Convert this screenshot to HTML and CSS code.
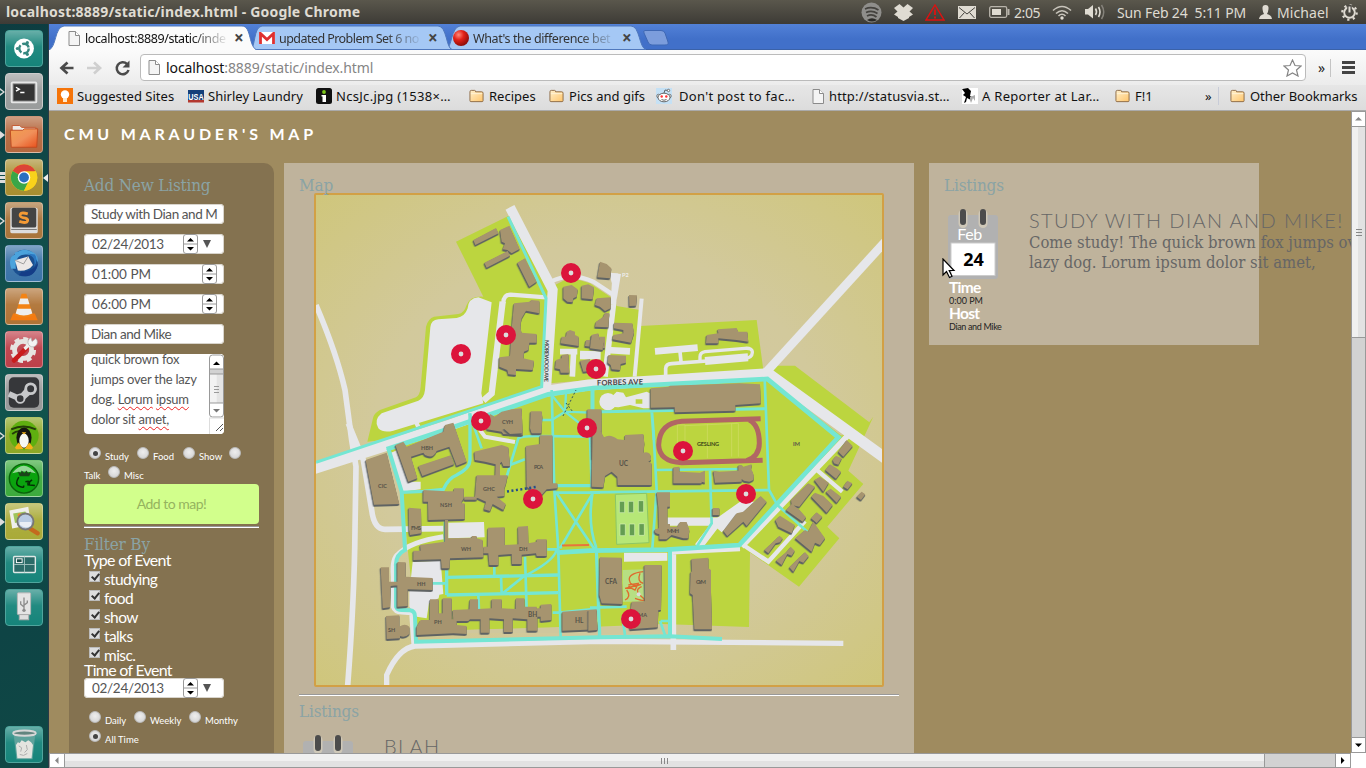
FILE: index.html
```html
<!DOCTYPE html>
<html lang="en">
<head>
<meta charset="utf-8">
<title>CMU Marauder's Map</title>
<link rel="stylesheet" href="styles.css">
</head>
<body>
<svg class="defs" width="0" height="0" aria-hidden="true">
  <defs>
    <linearGradient id="folderFill" x1="0" y1="0" x2="1" y2="1"><stop offset="0" stop-color="#fff0cc"/><stop offset="1" stop-color="#ffc56b"/></linearGradient>
    <linearGradient id="orangeFill" x1="0" y1="0" x2="1" y2="1"><stop offset="0" stop-color="#f2a050"/><stop offset=".5" stop-color="#f0905a"/><stop offset="1" stop-color="#e8501c"/></linearGradient>
    <radialGradient id="redBall" cx=".35" cy=".3" r=".8"><stop offset="0" stop-color="#ff8a7a"/><stop offset=".4" stop-color="#e32219"/><stop offset="1" stop-color="#7c0805"/></radialGradient>
    <radialGradient id="mapFill" cx=".5" cy=".5" r=".72"><stop offset="0" stop-color="#d3c8a6"/><stop offset=".55" stop-color="#d2c99c"/><stop offset="1" stop-color="#cfc67a"/></radialGradient>
    <symbol id="folder" viewBox="0 0 16 14"><path d="M1 12V2.500Q1 1 2.500 1H6Q7 1 7 2.500H13.500Q15 2.500 15 4V12Q15 13 14 13H2Q1 13 1 12Z" fill="url(#folderFill)" stroke="#8c6a45"/><path d="M2 4.500H14" stroke="#fff3d8"/></symbol>
    <symbol id="page" viewBox="0 0 12 15"><path d="M1 .5H7.500L11.500 4.500V14.500H1Z" fill="#f4f4f4" stroke="#8b8b8b"/><path d="M7.500 .5V4.500H11.500" fill="#fff" stroke="#8b8b8b"/></symbol>
    <symbol id="spin" viewBox="0 0 15 20"><rect x=".5" y=".5" width="14" height="19" rx="2.500" fill="#fff" stroke="#9a9a9a"/><path d="M0 10H15" stroke="#9a9a9a"/><path d="M4 7.500L7.500 4L11 7.500ZM4 13L7.500 16.500L11 13Z" fill="#000"/></symbol>
    <symbol id="cal" viewBox="0 0 52 72"><rect x="1" y="7" width="50" height="64" rx="3" fill="#b1b1b1"/><path d="M16 6V15.500M36 6V15.500" stroke="#cfc8b8" stroke-width="9" stroke-linecap="round"/><path d="M16 4V14M36 4V14" stroke="#4c4c4c" stroke-width="6" stroke-linecap="round"/><rect x="4" y="35" width="44" height="32.500" fill="#fff" stroke="#ccc"/></symbol>
  </defs>
</svg>

<header class="panelbar">
  <div class="wtitle">localhost:8889/static/index.html - Google Chrome</div>
  <div class="tray">
    <svg class="t-spot" width="21" height="21" viewBox="0 0 21 21"><circle cx="10.500" cy="10.500" r="10" fill="#8f8e8b"/><path d="M4 7Q11 4 17.500 8M5 10.500Q11 8 16.500 11.500M6 14Q11 11.500 15.500 15" fill="none" stroke="#44423e" stroke-width="1.800"/><path d="M6 18Q11 14.500 16 18Q11 21 6 18Z" fill="#2b2a27"/></svg>
    <svg class="t-drop" width="19" height="17" viewBox="0 0 19 17"><path d="M5.500 0L9.500 3.500L13.500 0L19 4L15.500 7.500L19 10.500L15 13V14L9.500 17L4 14V13L0 10.500L3.500 7.500L0 4Z" fill="#dfdbd2"/></svg>
    <svg class="t-warn" width="20" height="17" viewBox="0 0 20 17"><path d="M10 1L19 16H1Z" fill="none" stroke="#e01010" stroke-width="1.400"/><path d="M10 5.500V11M10 12.500V14.500" stroke="#e01010" stroke-width="1.800"/></svg>
    <svg class="t-mail" width="18" height="13" viewBox="0 0 18 13"><rect width="18" height="13" fill="#dfdbd2"/><path d="M1 1.500L9 8L17 1.500M1.500 12L6.500 6.500M16.500 12L11.500 6.500" fill="none" stroke="#45433e"/></svg>
    <svg class="t-batt" width="21" height="12" viewBox="0 0 21 12"><rect x=".7" y=".7" width="17" height="10.600" rx="1.500" fill="none" stroke="#b8b4ab" stroke-width="1.300"/><rect x="3" y="3" width="9" height="6" fill="#dfdbd2"/><rect x="18.500" y="3" width="2" height="6" fill="#b8b4ab"/></svg>
    <span class="t-205">2:05</span>
    <svg class="t-wifi" width="20" height="15" viewBox="0 0 20 15"><path d="M1 5.500Q10 -2.500 19 5.500M4 8.500Q10 3 16 8.500M6.500 11Q10 7.500 13.500 11" fill="none" stroke="#c8c4bb" stroke-width="1.600"/><circle cx="10" cy="13" r="1.700" fill="#dfdbd2"/></svg>
    <svg class="t-vol" width="20" height="16" viewBox="0 0 20 16"><path d="M0 5H3L8 1V14.500L3 10.500H0Z" fill="#dfdbd2"/><path d="M10.500 4.500Q12.500 8 10.500 11M13.500 3Q16.500 8 13.500 13" fill="none" stroke="#dfdbd2" stroke-width="1.600"/><path d="M16.500 1Q21 8 16.500 15" fill="none" stroke="#85827b" stroke-width="1.500"/></svg>
    <span class="t-date">Sun Feb 24&nbsp; 5:11 PM</span>
    <svg class="t-user" width="13" height="14" viewBox="0 0 13 14"><path d="M6.500 0Q10 0 9.500 4Q9 8 8 9Q12.500 10 13 14H0Q.5 10 5 9Q4 8 3.500 4Q3 0 6.500 0Z" fill="#dfdbd2"/></svg>
    <span class="t-name">Michael</span>
    <svg class="t-gear" width="17" height="17" viewBox="0 0 17 17"><circle cx="8.500" cy="8.500" r="5.300" fill="none" stroke="#dfdbd2" stroke-width="1.900"/><circle cx="8.500" cy="8.500" r="7.200" fill="none" stroke="#dfdbd2" stroke-width="2.200" stroke-dasharray="2.200 3.450"/><path d="M8.500 1V9" stroke="#4a4843" stroke-width="4.500"/><path d="M8.500 2.500V8.500" stroke="#dfdbd2" stroke-width="2"/></svg>
  </div>
</header>

<div class="desk">
<nav class="launcher">
  <div class="tile teal"><svg viewBox="0 0 37 37"><circle cx="18.500" cy="18.500" r="10.500" fill="#fff"/><circle cx="18.500" cy="18.500" r="5" fill="none" stroke="#35877f" stroke-width="2.600" stroke-dasharray="8.500 2"/><circle cx="11.500" cy="18.500" r="1.700" fill="#35877f"/><circle cx="22" cy="12.400" r="1.700" fill="#35877f"/><circle cx="22" cy="24.600" r="1.700" fill="#35877f"/></svg></div>
  <div class="tile silver"><i class="arr hollow"></i><svg viewBox="0 0 37 37"><rect x="4.500" y="8" width="28" height="23" rx="2" fill="#e6e6e6"/><rect x="7" y="10.500" width="23" height="18" fill="#333" stroke="#777"/><path d="M10 14L13.500 16L10 18M14.500 19.500H19" fill="none" stroke="#fff" stroke-width="1.500"/></svg></div>
  <div class="tile rust"><i class="arr"></i><svg viewBox="0 0 37 37"><path d="M6 12V9H14L16 11H31V20H6Z" fill="#f0ebe8" stroke="#c45a32"/><path d="M4 14H17L19 12.500H33L32 32H5Z" fill="url(#orangeFill)" stroke="#bf4a20"/></svg></div>
  <div class="tile gold"><i class="bars"></i><i class="arr rightside"></i><svg viewBox="0 0 37 37"><circle cx="18.500" cy="18.500" r="14" fill="#f9d21b"/><path d="M18.500 18.500L6.400 11.500A14 14 0 0 1 30.600 11.500Z" fill="#dc4437"/><path d="M18.500 18.500L6.400 11.500A14 14 0 0 0 18.500 32.500L24 22Z" fill="#3aa648"/><path d="M18.500 12H31A14 14 0 0 1 18.500 32.500L24 21Z" fill="#f9d21b"/><circle cx="18.500" cy="18.500" r="6.600" fill="#fff"/><circle cx="18.500" cy="18.500" r="5.200" fill="#2a6fc0"/></svg></div>
  <div class="tile brown"><i class="arr hollow"></i><svg viewBox="0 0 37 37"><rect x="4" y="5" width="29" height="27" rx="2" fill="#ddd"/><rect x="5.500" y="5" width="26" height="21" rx="2" fill="#444"/><path d="M22.500 11.500Q14 9 14.500 13.500Q15 15.500 20 16Q24 17.500 21.500 20Q19 21.500 13.500 19.500" fill="none" stroke="#f39a35" stroke-width="3"/><path d="M5 28H32" stroke="#777"/></svg></div>
  <div class="tile blue"><svg viewBox="0 0 37 37"><circle cx="19" cy="18" r="14" fill="#1b5090"/><path d="M5 24Q1 12 9 9Q8 6 12 6Q20 1 30 8Q34 12 33 17Q30 10 22 9Q14 8 11 14Q9 18 10 24Z" fill="#4ba3dc"/><path d="M9 15L23 11L28 20Q23 27 12 26Z" fill="#ece8e6"/><path d="M9 15L18 19L23 11" fill="none" stroke="#999"/><path d="M13 31Q30 36 33.500 18Q27 28 16 27Z" fill="#143d87"/><path d="M22 8Q32 12 29 22Q34 15 30 9Z" fill="#2b77c0"/></svg></div>
  <div class="tile amber"><svg viewBox="0 0 37 37"><path d="M7 26H30L33 33H4Z" fill="#f47b11"/><path d="M16 5H21L28 28Q18.500 32 9 28Z" fill="#f38315"/><path d="M14.500 10H22.500L24.300 16H12.700ZM11.200 21H25.800L27.300 26Q18 30 9.700 26Z" fill="#eee"/></svg></div>
  <div class="tile red"><svg viewBox="0 0 37 37"><circle cx="17.500" cy="19" r="11.500" fill="none" stroke="#e6e4e1" stroke-width="4.500" stroke-dasharray="5 4"/><circle cx="17.500" cy="19" r="9" fill="none" stroke="#e6e4e1" stroke-width="5"/><path d="M8 30L21 17" stroke="#c91c1c" stroke-width="5" stroke-linecap="round"/><path d="M19 18L27 10" stroke="#eee" stroke-width="3.500"/><path d="M31 7A5 5 0 1 1 26 6L27 10Z" fill="#f3f3f3" stroke="#aaa" stroke-width=".7"/></svg></div>
  <div class="tile steam"><svg viewBox="0 0 37 37"><rect x="2.500" y="2.500" width="32" height="32" rx="5" fill="#36373a"/><path d="M2.500 20L15 25.500" fill="none" stroke="#c7c8ca" stroke-width="6"/><path d="M14 21L21 13L27 19L18 27Z" fill="#c7c8ca"/><circle cx="25.500" cy="14.500" r="5.200" fill="#36373a" stroke="#c7c8ca" stroke-width="3"/><circle cx="14.500" cy="25" r="4.500" fill="#36373a" stroke="#c7c8ca" stroke-width="2"/></svg></div>
  <div class="tile lime"><i class="arr hollow"></i><svg viewBox="0 0 37 37"><circle cx="18.500" cy="18.500" r="15.500" fill="#5faf10"/><path d="M5 12Q18 6 31 12M6 17Q12 12 17 15" fill="none" stroke="#233c08" stroke-width="2"/><ellipse cx="18.500" cy="21" rx="8" ry="11" fill="#15150f"/><ellipse cx="18.500" cy="24" rx="5" ry="7.500" fill="#f7f7f2"/><path d="M16 15H21L18.500 17.500ZM9 31L13 26L18 33H10ZM28 31L24 26L19 33H27Z" fill="#f5b21a"/></svg></div>
  <div class="tile green"><svg viewBox="0 0 37 37"><circle cx="18.500" cy="18.500" r="15.500" fill="#0aa30e" stroke="#09620b" stroke-width="1.500"/><path d="M6 13Q18 -3 31 13Q18 9 6 13Z" fill="#e1f5e0" opacity=".65"/><path d="M13 17Q8 25 14 27Q19 29 18 26M20 22Q26 20 24 25M22 25L30 26M27 20L22 24" fill="none" stroke="#052d06" stroke-width="1.600"/><path d="M12 11L14 16H24L26 11L23 13L21 10L19 13L16 10L15 13Z" fill="#1b4419"/></svg></div>
  <div class="tile olive"><i class="arr"></i><svg viewBox="0 0 37 37"><path d="M3 7L23 3L26 22L6 26Z" fill="#efefec"/><path d="M7 10L20 8L22 17L9 20Z" fill="#9fc45c"/><circle cx="14" cy="12" r="2.200" fill="#f08a2c"/><path d="M25 26L33 31" stroke="#c46a1e" stroke-width="4.500" stroke-linecap="round"/><circle cx="20" cy="18.500" r="8.500" fill="#b9cbe3" stroke="#777" stroke-width="2"/><path d="M14 19H26V23Q20 27 14 22Z" fill="#e9eef6"/></svg></div>
  <div class="tile teal"><svg viewBox="0 0 37 37"><rect x="7.500" y="10" width="23" height="17" rx="1" fill="#2b6b68" stroke="#dfe9e7" stroke-width="1.500"/><path d="M19 10V27M8 18.500H30" stroke="#9fc0bc"/><rect x="10.500" y="12.500" width="6" height="4" fill="#1c4f4c" stroke="#fff"/></svg></div>
  <div class="tile teal"><svg viewBox="0 0 37 37"><rect x="11.500" y="3" width="14" height="23" rx="1" fill="#e4e4e4" stroke="#b5b5b5"/><rect x="13.500" y="26" width="10" height="5.500" fill="#dedede" stroke="#aaa"/><path d="M18.500 21V8M18.500 18L15 15V12M18.500 16L22 13.500V11" fill="none" stroke="#8b8b8b" stroke-width="1.400"/><circle cx="18.500" cy="21.500" r="1.800" fill="#8b8b8b"/></svg></div>
  <div class="tile teal trash"><svg viewBox="0 0 37 37"><path d="M7.500 7L10.500 34H27.500L30.500 7Z" fill="#5fa39c"/><path d="M10 19L12 16L14 17L16 14L20 16L23 14L26 16L28 19L26.500 33H11.500Z" fill="#e4e4df"/><path d="M13 20L16 22L15 26M21 19L22 24L19 27M14 29L18 30L22 28" fill="none" stroke="#aaa"/><ellipse cx="19" cy="6.500" rx="12" ry="2.800" fill="#62857f" stroke="#d7d7d7" stroke-width="2"/></svg></div>
</nav>

<section class="chrome">
  <div class="tabs">
    <svg class="tabshape" width="640" height="26" viewBox="49 0 640 26">
      <path d="M446 25.500C452 24 451 3 460 2H631C640 2 639 24 646 25.500Z" fill="#a5c8f5" stroke="#4f78bd"/>
      <path d="M250 25.500C256 24 253 3 262 2H438C447 2 446 24 452 25.500Z" fill="#a5c8f5" stroke="#4f78bd"/>
      <path d="M48 26.500C57 24 54 3 64 2H242C252 2 248 24 258 26.500Z" fill="#fbfbfb" stroke="#4f78bd"/>
      <path d="M645 6.500H661Q664 6.500 665 9L668 18Q669 21 665 21H652Q649 21 648 18L644 9Q643 6.500 645 6.500Z" fill="#7c9ddc" stroke="#3f68b4"/>
    </svg>
    <div class="tabrow">
      <div class="tab first"><svg width="12" height="15"><use href="#page"/></svg><span class="tt">localhost:8889/static/inde</span><b>×</b></div>
      <div class="tab second"><svg width="16" height="12" viewBox="0 0 16 12"><rect width="16" height="12" fill="#fff"/><path d="M1.500 12V1.500L8 7.500L14.500 1.500V12" fill="none" stroke="#df3030" stroke-width="2.800"/></svg><span class="tt">updated Problem Set 6 no</span><b>×</b></div>
      <div class="tab third"><svg width="16" height="16"><circle cx="8" cy="8" r="8" fill="url(#redBall)"/></svg><span class="tt">What's the difference bet</span><b>×</b></div>
    </div>
  </div>
  <div class="toolbar">
    <svg class="navs" width="74" height="18" viewBox="0 0 74 18"><path d="M15.500 9H4M9.500 3.500L3.500 9L9.500 14.500" fill="none" stroke="#4b4b4b" stroke-width="2.700"/><path d="M29 9H41M36 3.500L42 9L36 14.500" fill="none" stroke="#cfcfcf" stroke-width="2.700"/><path d="M69 5A6 6 0 1 0 70.500 11" fill="none" stroke="#4b4b4b" stroke-width="2.500"/><path d="M71.500 1.500V8.500H64.500Z" fill="#4b4b4b"/></svg>
    <div class="omni"><svg width="12" height="15"><use href="#page"/></svg><span class="url">localhost<i>:8889/static/index.html</i></span><svg class="star" width="19" height="18" viewBox="0 0 19 18"><path d="M9.500 1L12 6.500L18 7L13.500 11L15 17L9.500 14L4 17L5.500 11L1 7L7 6.500Z" fill="#fff" stroke="#858585" stroke-width="1.200"/></svg></div>
    <span class="more">»</span><i class="vsep"></i><i class="burger"></i>
  </div>
  <div class="bookmarks">
    <div class="bm b1"><svg width="16" height="16" viewBox="0 0 16 16"><rect width="16" height="16" fill="#f57409"/><circle cx="8" cy="6.500" r="4.200" fill="#fff"/><path d="M6 10H10V14H6Z" fill="#ffe9cb"/></svg><span>Suggested Sites</span></div>
    <div class="bm b2"><svg width="16" height="13" viewBox="0 0 16 13"><rect width="16" height="10" fill="#143f7a"/><rect y="10" width="16" height="2.500" fill="#b3382f"/><text x=".3" y="9.500" textLength="15.400" lengthAdjust="spacingAndGlyphs" class="usa">USA</text></svg><span>Shirley Laundry</span></div>
    <div class="bm b3 wide"><svg width="16" height="16" viewBox="0 0 16 16"><rect width="16" height="16" rx="2.500" fill="#111"/><circle cx="8" cy="4" r="1.900" fill="#7bc618"/><path d="M5.500 7H10V14H6.500V8.500H5.500Z" fill="#fff"/></svg><span>NcsJc.jpg (1538×…</span></div>
    <div class="bm b4"><svg width="15" height="14"><use href="#folder"/></svg><span>Recipes</span></div>
    <div class="bm b5"><svg width="15" height="14"><use href="#folder"/></svg><span>Pics and gifs</span></div>
    <div class="bm b6 wide"><svg width="16" height="16" viewBox="0 0 16 16"><rect width="16" height="16" fill="#c5e1f5"/><circle cx="2.500" cy="8" r="1.700" fill="#fff" stroke="#444" stroke-width=".7"/><circle cx="13.500" cy="8" r="1.700" fill="#fff" stroke="#444" stroke-width=".7"/><ellipse cx="8" cy="9.500" rx="6" ry="4.300" fill="#fff" stroke="#444" stroke-width=".8"/><circle cx="5.700" cy="8.500" r="1.200" fill="#f33"/><circle cx="10.300" cy="8.500" r="1.200" fill="#f33"/><path d="M5.500 11.500Q8 13 10.500 11.500M8 5L9 2L12 2.500" fill="none" stroke="#444" stroke-width=".8"/><circle cx="12.500" cy="2.500" r="1.200" fill="#fff" stroke="#444" stroke-width=".7"/></svg><span>Don't post to fac…</span></div>
    <div class="bm b7 wide"><svg width="12" height="15"><use href="#page"/></svg><span>http://statusvia.st…</span></div>
    <div class="bm b8 wide"><svg width="16" height="16" viewBox="0 0 16 16"><rect width="16" height="16" fill="#fff"/><path d="M0 1L6 0L9 3L8 8L10 9L9 12L5 10L4 14L2 15L4 9L1 7L3 5Z" fill="#000"/><path d="M8 9L13 7L13 13L11 10L9 15L8 12Z" fill="#aaa"/></svg><span>A Reporter at Lar…</span></div>
    <div class="bm b9"><svg width="15" height="14"><use href="#folder"/></svg><span>F!1</span></div>
    <div class="bm b10">»</div>
    <div class="bm b11"><svg width="15" height="14"><use href="#folder"/></svg><span>Other Bookmarks</span></div>
  </div>

  <div class="view">
    <main class="page">
      <h1>CMU MARAUDER'S MAP</h1>
      <div class="columns">
        <aside class="side">
          <h2>Add New Listing</h2>
          <div class="field txt">Study with Dian and M</div>
          <div class="field"><span class="dt">02/24/2013</span><svg width="15" height="20"><use href="#spin"/></svg><i class="drop"></i></div>
          <div class="field"><span class="dt tm">01:00 PM</span><svg class="endspin" width="15" height="20"><use href="#spin"/></svg></div>
          <div class="field"><span class="dt tm">06:00 PM</span><svg class="endspin" width="15" height="20"><use href="#spin"/></svg></div>
          <div class="field txt">Dian and Mike</div>
          <div class="area">
            <p>quick brown fox<br>jumps over the lazy<br>dog. <u>Lorum</u> <u>ipsum</u><br>dolor sit <u>amet,</u></p>
            <svg width="15" height="80" viewBox="0 0 15 80"><rect width="15" height="80" fill="#fff"/><rect x=".5" y="1" width="14" height="62" rx="3" fill="#fff" stroke="#999"/><rect x="1" y="15" width="13" height="5" fill="#d2d2d2"/><rect x="1" y="20" width="6.500" height="29" fill="#f2f2f2"/><rect x="7.500" y="20" width="6.500" height="29" fill="#e4e4e4"/><path d="M0 15H15M0 20H15M0 49H15" stroke="#999"/><path d="M5 32.500H10M5 35.500H10M5 38.500H10" stroke="#999"/><path d="M4 11L7.500 7.500L11 11Z" fill="#000"/><path d="M4 55L7.500 58.500L11 55Z" fill="#777"/><path d="M.5 64V80M0 64H15" stroke="#ddd"/><path d="M7 77L14 70M11 77L14 74" stroke="#555"/></svg>
          </div>
          <div class="radios">
            <div class="rrow"><i class="rad on"></i><span class="w1">Study</span><i class="rad"></i><span class="w2">Food</span><i class="rad"></i><span class="w3">Show</span><i class="rad"></i></div>
            <div class="rrow r2"><span class="w4">Talk</span><i class="rad"></i><span>Misc</span></div>
          </div>
          <div class="add">Add to map!</div>
          <div class="hr"></div>
          <h2 class="filt">Filter By</h2>
          <div class="lab">Type of Event</div>
          <div class="chk"><i></i><span>studying</span></div>
          <div class="chk"><i></i><span>food</span></div>
          <div class="chk"><i></i><span>show</span></div>
          <div class="chk"><i></i><span>talks</span></div>
          <div class="chk"><i></i><span>misc.</span></div>
          <div class="lab time">Time of Event</div>
          <div class="field"><span class="dt">02/24/2013</span><svg width="15" height="20"><use href="#spin"/></svg><i class="drop"></i></div>
          <div class="rrow"><i class="rad"></i><span class="w5">Daily</span><i class="rad"></i><span class="w6">Weekly</span><i class="rad"></i><span>Monthy</span></div>
          <div class="rrow"><i class="rad on"></i><span>All Time</span></div>
        </aside>

        <section class="mid">
          <h2>Map</h2>
          <svg class="map" viewBox="316 195 566 490" width="566" height="490">
            <rect x="316" y="195" width="566" height="490" fill="url(#mapFill)"/>
            <g class="grass">
              <path d="M385 446L550 391L765 377L843 437L740 545L750 552L749 627L662 624L590 627L460 630L417 633L407 543L402 490Z"/>
              <g transform="translate(310 190) scale(.33333)"><path d="M438 155L595 78L720 310L700 590L220 750L172 755L190 680Q195 668 210 660L318 622Q330 615 332 590L348 410Q355 385 372 380L445 372Q462 370 470 345Q480 318 520 320Z"/></g>
              <g transform="translate(590 190) scale(.33333)"><path d="M-115 290L-60 262L0 280L75 330L80 348L150 360V408L500 390L520 540L0 570L-120 580ZM545 540L550 527H615L840 698L805 740Z"/></g>
              <g transform="translate(590 430) scale(.33333)"><path d="M740 20L820 0L850 -40L775 122L820 162L712 290L748 325L627 470L455 350Z"/></g>
            </g>
            <path class="lot" d="M467 630L559 627V633H467ZM590 627H662V634H590Z"/>
            <g class="road">
              <g transform="translate(310 190) scale(.33333)">
                <path class="solid" d="M545 337L505 322Q475 325 473 355Q465 380 440 384L385 388Q363 390 361 412L345 600Q342 625 325 632L215 670Q190 690 205 715Q220 730 250 722L520 640L514 610Z"/>
                <path d="M578 335L545 610L520 632" stroke-width="19"/><path d="M580 340Q580 314 602 314L708 322" stroke-width="13"/>
                <path d="M600 52L728 300L708 598" stroke-width="30"/><path d="M722 275Q783 245 850 275L918 320" stroke-width="13"/>
                <path d="M750 485H802M791 485L787 560" stroke-width="17"/><path d="M810 495L872 496" stroke-width="25"/>
                <path d="M18 345Q80 490 105 600L125 750L138 830L135 1020Q133 1230 112 1500" stroke-width="17"/>
                <path d="M315 690L325 710" stroke-width="13"/>
                <path d="M0 840L420 705L700 605L835 585L1375 551L1740 815" stroke-width="33"/>
              </g>
              <g transform="translate(590 190) scale(.33333)">
                <path d="M530 545L890 150" stroke-width="26"/><path d="M76 250L70 345L45 560" stroke-width="17"/><path class="solid" d="M62 248L93 252L80 330L72 290Q60 275 62 248Z"/><path d="M155 326L134 560" stroke-width="12"/><path d="M50 480L120 484" stroke-width="20"/>
                <path d="M195 484L323 473" stroke-width="20"/><path d="M270 485L273 515M227 555V535Q228 522 245 521L350 513" stroke-width="11"/><path d="M330 510V500Q330 488 345 485L465 475Q488 473 487 488Q486 503 465 506" stroke-width="10"/><path d="M345 513L474 502" stroke-width="24"/>
                <circle class="solid" cx="54" cy="635" r="26"/><path class="solid" fill-rule="evenodd" d="M65 620L80 605L100 608L108 622L170 605L180 610V655L160 655L120 645L85 652L60 650ZM137 628H157V641H137Z"/>
              </g>
              <g transform="translate(310 430) scale(.33333)">
                <path d="M115 -20L160 90L185 240Q192 298 225 298L400 296" stroke-width="17"/>
                <path d="M400 320Q300 335 265 372Q245 385 250 440V530Q255 545 275 546L305 548L312 648" stroke-width="15"/><path d="M230 768V735Q265 655 315 648L870 634L1600 640" stroke-width="16"/>
                <path class="solid" d="M415 278L522 276L524 322L415 325ZM308 395L392 392L400 492L388 494L386 505L357 520L350 565L320 560L298 530V490ZM243 68L275 55L300 155H332V178L275 185Z"/><path d="M510 0L525 20L615 36" stroke-width="12"/>
              </g>
              <g transform="translate(590 430) scale(.33333)">
                <path d="M232 275H385M375 285L325 350" stroke-width="25"/><path class="solid" d="M380 265L450 215H495L395 307L370 285ZM102 368H232V392L102 395Z"/>
                <path d="M250 360V660M775 15L455 350M245 365L450 355" stroke-width="17"/><path d="M460 345L535 395L645 273M675 115L757 185" stroke-width="13"/>
              </g>
            </g>
            <g class="walk">
              <g transform="translate(310 430) scale(.33333)">
                <path d="M18 97L695 -130L708 -395L594 -640" stroke-width="9"/>
                <path d="M230 58L405 0L715 -107L850 -126L1372 -153L1585 22L1288 345L1070 359L840 362L740 368" stroke-width="14"/>
                <path d="M235 55L275 185L285 360Q255 375 258 410V530Q262 540 275 540L300 541Q315 543 315 560L318 635L870 622L1080 619L1236 627" stroke-width="12"/>
                <path d="M275 187L340 184L400 178Q415 145 440 135Q480 115 480 90V-50M410 400V495M410 442L745 435M410 495L745 488M733 167H870" stroke-width="10"/>
                <path d="M405 275V335M365 460H410M573 440L575 490M645 380L650 540M505 495L507 540M553 400V440M578 490L640 440Q730 395 740 360M725 -120L733 180L745 360L752 620M733 188H870M740 190L855 360M848 190L750 355M848 185Q832 280 858 350L868 620M712 358H745M600 105L645 88M590 140L625 25Q635 18 680 18L840 20L845 165M478 -50L515 55M728 548H750L870 535" stroke-width="8"/>
              </g>
              <g transform="translate(310 190) scale(.33333)"><path d="M690 690H725L765 665L840 668M725 615L765 665L840 725M768 610L765 665M850 600V680" stroke-width="7"/></g>
              <g transform="translate(590 190) scale(.33333)"><path d="M6 595V660M0 666L525 656M185 660L192 750" stroke-width="9"/></g>
              <g transform="translate(590 430) scale(.33333)"><path d="M190 0L200 180L187 355M0 187L537 180M524 -155L530 0L537 180L562 225L652 305M200 120L450 117M360 120L365 280L320 350M20 360L30 620M0 533L110 530M97 560L105 615M212 573H240M210 573L225 615" stroke-width="8"/><path d="M240 360V618" stroke-width="12"/></g>
            </g>
            <g class="track" transform="translate(590 190) scale(.33333)">
              <path d="M512 686L275 694Q208 700 206 765Q208 815 275 818L518 811M478 690Q508 705 508 760Q508 800 470 812"/>
              <path class="lines" d="M262 705H285V800M262 705V800M285 707L445 700V800M352 702V805M425 700V800"/>
            </g>
            <g transform="translate(590 430) scale(.33333)">
              <path d="M76 193L170 190L177 338L80 343Z" fill="#b6e777" stroke="#8cc765" stroke-width="3"/><path d="M88 214H104V248H88ZM115 214H131V248H115ZM145 212H161V246H145ZM90 282H106V317H90ZM118 282H134V317H118ZM147 281H163V316H147Z" fill="#659d52" stroke="#d7f2b5" stroke-width="2"/>
              <path d="M98 420L165 418V515L98 515Z" fill="#b7df83"/><path d="M160 425Q115 430 118 450T145 465T105 475M155 470Q130 480 155 500T135 505M110 480Q125 500 105 510M150 430Q140 455 160 460M115 465L145 460L135 480L115 470" fill="none" stroke="#df6b2e" stroke-width="4"/><circle cx="146" cy="493" r="6" fill="#ddd"/>
            </g>
            <g class="bld">
              <g transform="translate(310 190) scale(.33333)">
                <path d="M490 150L558 114L566 130L496 165ZM570 120L598 107L629 177L605 190L592 180L578 178L585 160L575 155ZM523 218L593 183L600 197L530 233ZM622 218L645 205L680 275L658 290ZM612 340L660 335L663 330L688 332V370L648 362L635 385Q628 410 635 428L680 432V458L658 458L655 480L642 485L640 505L672 512L668 540L618 537V555L595 553L592 540L568 530V502L600 498L606 405ZM760 290L785 285L803 298L800 320L790 325L788 337L772 335L760 325ZM815 287L835 283L852 292L848 328L815 325ZM770 425L780 420L795 425V435L806 440V468L752 460L755 440H768ZM845 435L865 430V440H885V475L825 468L828 450H843ZM755 495L775 492L778 548L752 548L750 538L735 535L738 510L755 505ZM810 512L840 507V543L820 545ZM530 718L540 672L555 680L575 665L605 658L635 655L638 735L580 732L575 725ZM662 664H695L697 680L694 730H665L660 715ZM832 658H874L876 805H846L845 720H832Z"/>
              </g>
              <g transform="translate(590 190) scale(.33333)">
                <path d="M30 215L50 222L64 235L60 265L22 262ZM117 315L141 316L138 347L118 348ZM20 325L62 322V355L45 363L30 350L15 345ZM45 368L58 370L55 412L15 410L18 395L40 380ZM72 398L127 400L132 428L123 458L68 448L70 435L100 430V420L72 415ZM5 435L25 432L30 450L40 455L38 480L0 475ZM55 495L108 497V518L92 522L90 540L65 538L62 525L53 518ZM350 435L385 430L383 418L440 414L445 425L472 425L475 455L440 450L385 445V460L348 460ZM182 595L235 590L240 587L448 580L510 583L512 640L436 645V662L255 667L254 652L182 653Z"/>
              </g>
              <g transform="translate(310 430) scale(.33333)">
                <path d="M167 90L230 68L268 222L192 224ZM256 45L280 35L290 50L400 5L405 -15L430 -22L470 95L440 107L418 50L380 63Q370 88 345 75L340 68L303 80L322 145L295 155ZM325 108L422 76L432 103L337 138ZM493 65L575 45L595 52L600 108L580 108L575 95L570 100V150L555 150L557 103L525 95L495 90ZM500 136H593L588 160L583 175L583 198L560 200L587 222L580 240L548 222L540 243L522 238L528 215L495 200ZM340 180L410 184H432V175H461V205L455 215V220H464V267L355 270L354 215L340 215ZM463 200H500V209H463ZM296 233L333 236L334 310L300 315L297 300ZM648 48L690 42V16H727L728 160H742V175L710 178L695 195L680 190L650 170ZM330 345L405 335V270H414V325L485 324V318H500V325L518 330L520 382L420 385L418 415L395 415L393 388L310 390V362H332ZM520 350H533L534 293L584 292V345L625 343L624 290L654 288L655 340L680 335V328H710V378H680L678 370L635 374V402H606L605 372L565 375V405H538L535 370H520ZM262 396L287 397V440L368 444V480L293 478V528L262 530ZM212 412L237 412V455H262V466L242 468L240 532L218 535ZM228 558L268 556V590Q285 578 298 590V612Q285 625 270 618V625L230 627ZM320 590L332 570H360V508H386V550H398V505H425V568H440V585L470 588V612L430 610L320 615ZM428 540L478 538L480 508H504V537L545 535V508H575V535L617 537L618 505H643V530H680V535H692V524L724 522V570L692 573V560H682V602H652V568L608 565V606H582V568L538 565V608H512V568H480L475 573H430ZM757 545L860 538L862 598L757 602ZM580 -5H625L637 10L600 12Z"/>
              </g>
              <g transform="translate(590 430) scale(.33333)">
                <path d="M8 -20L30 0L42 22Q60 10 83 28L105 30V15L160 12L163 40L160 68Q185 62 183 90L175 95L185 100V165L83 165L82 140L65 125L45 138L40 172L5 170ZM250 112L268 110V125L330 128L345 122V158L335 155V160H250ZM370 122L388 125L445 122V105H455L460 110L485 103L483 118Q495 130 490 150L478 155L462 152L455 147V155L375 158ZM200 187H240V230H232V282H240V290L262 290L270 276H290L298 300L295 325H280L245 315L230 328H208V312Q190 310 195 298L207 295L205 232ZM368 234H388V255H368ZM400 303L440 250L460 245L512 198L530 215L470 288L460 275L412 318ZM745 65L770 30L788 48L760 80ZM728 90L738 77L755 85L745 104L732 100ZM706 120L720 103L740 115L753 125L738 146ZM760 170L772 152L787 160L773 178ZM800 200L815 185L826 193L813 210ZM673 150L690 140L716 158L700 185ZM708 185L722 176L753 200L740 218ZM603 210L655 160L675 170L628 230L605 225ZM664 200L675 188L700 198L728 225L710 248ZM588 240L605 222L627 238L648 262L638 275ZM663 265L680 247L697 260L680 279ZM556 270L570 257L614 285L605 310L565 290ZM616 325L645 300L655 305L670 275L705 325L690 345L675 338L665 365ZM555 330L568 317L578 325L570 337L557 340L535 370L523 360ZM590 365L602 350L614 362L605 377L592 372L575 405L558 392ZM630 380L645 366L656 378L640 398L628 393L610 425L598 412ZM30 382L95 383L97 522L35 520L28 495ZM163 405H215L213 540H205L203 592L120 598L118 580L125 515L165 514ZM-5 540H20L22 600L-5 602ZM304 387L355 383V415L363 420V485L366 598H313L308 495L300 490L302 425H306Z"/>
              </g>
            </g>
            <g fill="none"><path d="M562 545.500L589 545" stroke="#e8743c" stroke-width="2"/><path d="M507 491.500L536 487" stroke="#244c8c" stroke-width="2.500" stroke-dasharray="2 2.500"/><path d="M563 416L576 390M566 403L573 412" stroke="#315463" stroke-dasharray="2 2"/></g>
            <g class="maplabels">
              <text x="597" y="385.500" textLength="46" class="ave" transform="rotate(-1.500 597 385)">FORBES AVE</text>
              <text x="545" y="340" textLength="42" class="ave small" transform="rotate(91 545 340)">MOREWOOD AVE</text>
              <text x="502" y="423.500" textLength="11">CYH</text><text x="421" y="449.500" textLength="12">HBH</text><text x="378" y="488">CIC</text><text x="440" y="506.500" textLength="12">NSH</text><text x="411" y="529.500" textLength="10">FMS</text><text x="483" y="490.500" textLength="12">GHC</text><text x="534" y="468.500" textLength="9">PCA</text><text x="461" y="550.500">WH</text><text x="519" y="551">DH</text><text x="417" y="586">HH</text><text x="434" y="624">PH</text><text x="388" y="632">SH</text><text x="528" y="617" class="big">BH</text><text x="575" y="622.500" class="big">HL</text><text x="619" y="465.500" class="big">UC</text><text x="697" y="446" textLength="22" class="dark">GESLING</text><text x="793" y="445.500">IM</text><text x="667" y="533" textLength="12">MMH</text><text x="605" y="583.500" class="big" textLength="12">CFA</text><text x="696" y="584" textLength="10">GYM</text><text x="638" y="617">MA</text><text x="622" y="277" class="pale">P2</text>
            </g>
            <g class="pins">
              <circle cx="461" cy="354" r="6.200"/><circle cx="506" cy="335" r="6.200"/><circle cx="571" cy="273" r="6.200"/><circle cx="596" cy="369" r="6.200"/><circle cx="481" cy="421" r="6.200"/><circle cx="587" cy="428" r="6.200"/><circle cx="683" cy="451" r="6.200"/><circle cx="746" cy="494" r="6.200"/><circle cx="533" cy="499" r="6.200"/><circle cx="631" cy="619" r="6.200"/>
            </g>
          </svg>
          <div class="hr"></div>
          <h2 class="lower">Listings</h2>
          <article class="item">
            <div class="when"><div class="calbox"><svg width="52" height="72"><use href="#cal"/></svg></div></div>
            <div class="what"><h3 class="blah">BLAH</h3></div>
          </article>
        </section>

        <section class="right">
          <h2>Listings</h2>
          <article class="item">
            <div class="when"><div class="calbox"><svg width="52" height="72"><use href="#cal"/></svg><span class="mon">Feb</span><span class="day">24</span></div><b>Time</b><small>0:00 PM</small><b>Host</b><small class="host">Dian and Mike</small></div>
            <div class="what"><h3>STUDY WITH DIAN AND MIKE!</h3><p>Come study! The quick brown fox jumps over the<br><span>lazy dog. Lorum ipsum dolor sit amet,</span></p></div>
          </article>
        </section>
      </div>
      <svg class="cursor" width="14" height="21" viewBox="0 0 14 21"><path d="M1 1V17L4.500 13.500L7.500 19.500L10 18.300L7.200 12.500H12Z" fill="#fff" stroke="#000" stroke-width="1.200"/></svg>
    </main>
    <div class="vbar"><i class="btn"><svg width="13" height="14"><path d="M3 8.500L6.500 5L10 8.500Z"  fill="#888"/></svg></i><i class="thumb"></i><i class="rest"></i><i class="btn"><svg width="13" height="14"><path d="M3 5.500L6.500 9L10 5.500Z"/></svg></i></div>
    <div class="hbar"><i class="btn"><svg width="13" height="13"><path d="M8.500 3L5 6.500L8.500 10Z" fill="#888"/></svg></i><i class="thumb"></i><i class="rest"></i><i class="btn"><svg width="13" height="13"><path d="M5 3L8.500 6.500L5 10Z"/></svg></i></div>
    <div class="corner"></div>
  </div>
</section>
</div>
</body>
</html>
```
FILE: styles.css
```css
* { box-sizing: border-box; }
html, body { margin: 0; height: 100%; overflow: hidden; }
body { display: flex; flex-direction: column; font-family: "Noto Sans", "Open Sans", sans-serif; font-size: 13px; color: #222; white-space: nowrap; }
svg { display: block; flex: none; }
i { font-style: normal; }
.defs { position: absolute; }

.panelbar { height: 24px; flex: none; display: flex; align-items: center; background: linear-gradient(#5a574c, #3d3b36); color: #dfdbd2; padding-left: 6px; }
.wtitle { width: 855px; font-weight: 700; font-size: 14px; letter-spacing: .2px; margin-top: -2px; }
.tray { display: flex; align-items: center; font-size: 14px; }
.t-drop { margin-left: 12px; } .t-warn { margin-left: 12px; } .t-mail { margin-left: 13px; } .t-batt { margin-left: 13px; }
.t-205 { margin-left: 4px; width: 28px; letter-spacing: -.4px; } .t-wifi { margin-left: 10px; } .t-vol { margin-left: 13px; }
.t-date { margin-left: 12px; width: 130px; letter-spacing: -.15px; } .t-user { margin-left: 12px; } .t-name { margin-left: 5px; width: 52px; letter-spacing: .1px; } .t-gear { margin-left: 12px; }

.desk { flex: 1; display: flex; min-height: 0; }
.launcher { width: 49px; flex: none; display: flex; flex-direction: column; gap: 6px; padding: 6px 0 5px 5px; background: linear-gradient(160deg, #0d3c40, #125650 45%, #0f5049 60%, #0e4445 80%, #0f4845); border-right: 1px solid #2a3a47; }
.tile { position: relative; width: 38px; height: 37px; flex: none; border-radius: 4px; border: 1px solid rgba(255,255,255,.3); background: linear-gradient(rgba(255,255,255,.35), rgba(255,255,255,.05) 45%, rgba(255,255,255,0)), var(--c); }
.tile svg { width: 36px; height: 35px; }
.teal { --c: #16847a; border-color: #4fa59d; } .silver { --c: #9a9c9c; border-color: #ccc; } .rust { --c: #b4683e; } .gold { --c: #a88e30; } .brown { --c: #a8743a; } .blue { --c: #3a73a8; } .amber { --c: #af7336; } .red { --c: #bd3f49; } .steam { --c: #999; } .lime { --c: #8da826; } .green { --c: #3caa3d; } .olive { --c: #a9aa37; }
.trash { margin-top: auto; }
.arr { position: absolute; left: -6px; top: 14px; border: 4px solid transparent; border-left: 5px solid #ddd; border-right: 0; }
.arr.hollow::after { content: ""; position: absolute; left: -5px; top: -2px; border: 2px solid transparent; border-left: 3px solid #0e4a48; }
.arr.rightside { left: 37px; border: 4px solid transparent; border-right: 5px solid #eee; border-left: 0; }
.bars { position: absolute; left: -6px; top: 12px; width: 5px; height: 11px; background: repeating-linear-gradient(#ddd 0 3px, transparent 3px 4px); }

.chrome { flex: 1; min-width: 0; display: flex; flex-direction: column; }
.tabs { height: 26px; flex: none; display: grid; background: linear-gradient(#5281d8, #4170c9 60%, #4170c9); border-bottom: 1px solid #3b62a8; }
.tabshape, .tabrow { grid-area: 1 / 1; }
.tabrow { display: flex; align-items: center; z-index: 1; height: 28px; font-size: 12.5px; padding-left: 19px; }
.tab { display: flex; align-items: center; color: #333; }
.tab.first { width: 191px; color: #111; } .tab.second { width: 194px; }
.tt { display: block; overflow: hidden; width: 144px; letter-spacing: -.4px; -webkit-mask-image: linear-gradient(90deg, #000 74%, transparent 100%); mask-image: linear-gradient(90deg, #000 74%, transparent 100%); }
.first .tt { margin-left: 5px; } .second .tt { margin-left: 4px; letter-spacing: -.55px; } .third .tt { margin-left: 4px; }
.tab b { margin-left: 5px; font-size: 17px; line-height: 20px; color: #444; }
.toolbar { height: 35px; flex: none; display: flex; align-items: center; background: linear-gradient(#fbfbfb, #ececec); padding-left: 9px; }
.omni { margin-left: 8px; width: 1166px; height: 27px; display: flex; align-items: center; background: #fff; border: 1px solid #bbb; border-radius: 4px; padding: 0 3px 0 7px; }
.url { margin-left: 6px; font-size: 14px; letter-spacing: -.1px; color: #111; } .url i { color: #858585; }
.star { margin-left: auto; }
.more { margin-left: 12px; width: 12px; font-size: 14px; }
.vsep { width: 1px; height: 18px; background: #c4c4c4; }
.burger { margin-left: 11px; width: 13px; height: 13px; background: linear-gradient(#444 0 3px, transparent 3px 5px, #444 5px 8px, transparent 8px 10px, #444 10px 13px); }
.bookmarks { height: 26px; flex: none; display: flex; align-items: center; background: linear-gradient(#e6e6e6, #dcdcdc); border-bottom: 1px solid #aaa; padding: 0 0 3px 8px; color: #111; letter-spacing: .02px; }
.bm { display: flex; align-items: center; gap: 4px; flex: none; }
.bm.wide { letter-spacing: .3px; }
.b1 { width: 131px; } .b2 { width: 128px; } .b3 { width: 153px; } .b4 { width: 80px; } .b5 { width: 107px; } .b6 { width: 156px; gap: 7px; } .b7 { width: 150px; gap: 5px; } .b8 { width: 153px; } .b9 { width: 90px; } .b10 { width: 14px; border-right: 1px solid #c8ccd8; margin-right: 11px; } .b11 { gap: 5px; letter-spacing: -.05px; }
.bm.b7 { letter-spacing: .15px; }
.b4, .b5, .b9 { gap: 5px; }
.usa { font: 700 9px "Liberation Sans", sans-serif; fill: #fff; }

.view { flex: 1; min-height: 0; display: grid; grid-template: 642px 15px / 1302px 15px; }
.page { position: relative; overflow: hidden; background: #9f8b5f; padding: 0 0 0 15px; font-family: Lato, sans-serif; }
h1, h2, h3, p { margin: 0; font-weight: 400; }
h1 { height: 52px; line-height: 46px; font-size: 16px; font-weight: 700; letter-spacing: 3.8px; color: #fff; }
.columns { display: flex; align-items: flex-start; padding-left: 5px; }
.side { width: 205px; height: 620px; padding: 0 15px; background: #847250; border-radius: 10px; color: #fff; flex: none; }
h2 { height: 41px; font: 17px/45px "DejaVu Serif", serif; font-stretch: condensed; color: #8aa3a5; letter-spacing: -.2px; }
.field { width: 140px; height: 20px; margin-bottom: 10px; border-radius: 4px; background: #fff; border: 0; display: flex; align-items: center; color: #555; font-size: 13.5px; padding-left: 8px; box-shadow: inset 0 0 0 1px #d8d4cc; }
.field.txt { padding-left: 7px; letter-spacing: -.42px; }
.dt { width: 91px; font-size: 13.5px; letter-spacing: -.3px; }
.dt.tm { letter-spacing: .05px; }
.endspin { margin-left: 19px; }
.drop { margin-left: 5px; border: 4.500px solid transparent; border-top: 8px solid #555; border-bottom: 0; }
.area { width: 140px; height: 80px; display: flex; justify-content: space-between; background: #fff; border-radius: 4px; overflow: hidden; padding-left: 7px; color: #555; font-size: 13px; }
.area p { line-height: 20px; margin-top: -5px; letter-spacing: -.22px; }
.area u { text-decoration: underline wavy #e22 1px; text-underline-offset: 2px; }
.radios { padding-top: 10px; height: 50px; }
.rrow { height: 19px; display: flex; align-items: center; font-size: 9.5px; padding-left: 5px; }
.rrow span { padding-top: 5px; margin-left: 4px; } .rrow.r2 { padding-left: 0; } .rrow.r2 .w4 { margin-left: 0; width: 24px; }
.w1 { width: 32px; } .w2 { width: 30px; } .w3 { width: 30px; } .w5 { width: 29px; } .w6 { width: 39px; }
.rad { width: 12px; height: 12px; margin-top: -1px; border-radius: 50%; flex: none; background: radial-gradient(circle at 50% 40%, #eee, #cfcfcf); border: 1px solid #bbb; display: grid; place-items: center; }
.rad.on::after { content: ""; width: 5px; height: 5px; border-radius: 50%; background: #444; }
.add { height: 40px; border-radius: 4px; background: #d2ff8c; color: #95b35f; font-size: 14px; line-height: 40px; text-align: center; letter-spacing: -.5px; }
.hr { height: 2px; background: #fff; border-top: 1px solid #999; margin-top: 2px; }
h2.filt { height: 24px; line-height: 32px; }
.lab { height: 17px; line-height: 15px; font-size: 16px; letter-spacing: -.72px; }
.lab.time { height: 14px; line-height: 12px; }
.chk { height: 19px; display: flex; align-items: center; font-size: 15.5px; padding-left: 5px; letter-spacing: -.6px; }
.chk i { width: 11px; height: 11px; margin: -4px 4px 0 0; background: #ddd; border: 1px solid #bbb; position: relative; }
.chk i::after { content: ""; position: absolute; left: 3px; top: 0; width: 3px; height: 6px; border: solid #333; border-width: 0 2px 2px 0; transform: rotate(40deg); }

.mid { margin-left: 10px; width: 630px; height: 620px; background: #bfb39c; padding: 0 15px; flex: none; }
.mid > h2:first-child { height: 30px; }
.map { box-sizing: content-box; margin-left: 15px; border: 2px solid #d2a045; border-radius: 2px; }
.mid .hr { margin-top: 7px; }
h2.lower { height: 37px; line-height: 31px; }
.right { margin-left: 15px; width: 330px; height: 182px; background: #bfb39c; padding: 0 15px; flex: none; }
.right h2 { height: 44px; }
.item { display: flex; margin-top: 1px; }
.when { width: 85px; flex: none; display: flex; flex-direction: column; padding-left: 3px; }
.calbox { display: grid; width: 52px; height: 72px; }
.calbox > * { grid-area: 1 / 1; }
.mon { color: #fff; font-size: 16px; text-align: center; padding: 16px 7px 0 0; letter-spacing: -.5px; }
.day { color: #000; font: 700 18px "Noto Sans", sans-serif; text-align: center; padding: 39px 0 0 1px; }
.when b { color: #fff; font-size: 15.500px; line-height: 15px; margin-left: 2px; letter-spacing: -.7px; }
.when small { color: #222; font-size: 9px; line-height: 11px; margin-left: 2px; }
.when .host { letter-spacing: -.35px; line-height: 11px; }
h3 { font-size: 20px; font-weight: 300; letter-spacing: 1.38px; color: #666; line-height: 24px; }
.what p { font: 16.500px/20px "DejaVu Serif", serif; font-stretch: condensed; color: #666; letter-spacing: .03px; margin-top: 1px; }
.cursor { position: absolute; left: 893px; top: 147px; }

.grass path { fill: #bcd53f; }
.lot { fill: #cfc79d; }
.road path { fill: none; stroke: #e6e7ea; } .road .solid { fill: #e6e7ea; stroke: none; }
.walk path { fill: none; stroke: #74e6d3; }
.track path { fill: none; stroke: #b16664; stroke-width: 15; } .track .lines { stroke: #d1dd68; stroke-width: 2; }
.bld path { fill: #a6946f; filter: drop-shadow(-1px 3px 0 #5f6363) drop-shadow(-1px 3px 0 #5f6363); }
.maplabels text { font: 700 5.500px Lato, sans-serif; fill: #565349; } .maplabels .big { font-size: 6.500px; } .maplabels .ave { font-size: 7.500px; fill: #444; } .maplabels .small { font-size: 5.500px; } .maplabels .dark { fill: #3c4a18; } .maplabels .pale { fill: #eee; }
.pins circle { fill: #ddd; stroke: #dc143c; stroke-width: 7.6; }

.vbar, .hbar { display: flex; border: 1px solid #999; }
.vbar { flex-direction: column; }
.btn { flex: none; background: #fff; } .vbar .btn { height: 14px; } .hbar .btn { width: 14px; }
.thumb { flex: none; display: block; border: 0 solid #999; }
.vbar .thumb { height: 212px; border-width: 1px 0; background: linear-gradient(#888,#888) 4px 102px / 6px 1px no-repeat, linear-gradient(#888,#888) 4px 105px / 6px 1px no-repeat, linear-gradient(#888,#888) 4px 108px / 6px 1px no-repeat, linear-gradient(90deg, #f0f0f0 50%, #e2e2e2 50%); }
.hbar .thumb { width: 1201px; border-width: 0 1px; background: linear-gradient(#888,#888) 596px 4px / 1px 6px no-repeat, linear-gradient(#888,#888) 599px 4px / 1px 6px no-repeat, linear-gradient(#888,#888) 602px 4px / 1px 6px no-repeat, linear-gradient(#f0f0f0 50%, #e2e2e2 50%); }
.rest { flex: 1; background: #d2d2d2; }
.rest + .btn { box-shadow: 0 0 0 1px #999; }
.corner { background: #fff; }
```
